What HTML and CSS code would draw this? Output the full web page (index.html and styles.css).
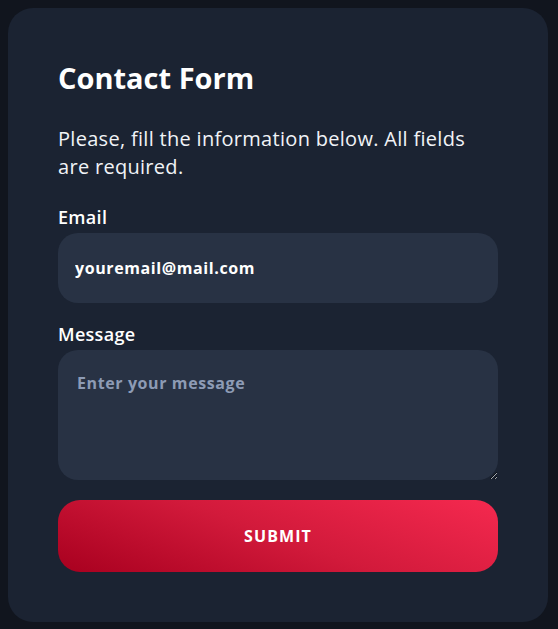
FILE: index.html
```html
<!DOCTYPE html>
<html lang="en">
<head>
  <meta charset="UTF-8" />
  <title>Contact Form</title>
  <link rel="stylesheet" href="styles.css">
</head>
<body>
  <div class="card">
    <h1>Contact Form</h1>
    <p class="intro">Please, fill the information below. All fields are required.</p>

    <form class="contact-form" onsubmit="return false">
      <label for="email">Email</label>
      <input id="email" type="email" value="youremail@mail.com">

      <label for="message">Message</label>
      <textarea id="message" placeholder="Enter your message"></textarea>

      <button type="submit">SUBMIT</button>
    </form>
  </div>
</body>
</html>
```

FILE: styles.css
```css
body {
  margin: 0;
  padding: 8px;
  background: #11151e;
  font-family: 'Open Sans', 'DejaVu Sans', sans-serif;
  color: #fff;
}

.card {
  background: #1b2332;
  border-radius: 25px;
  padding: 50px 50px 48px 50px;
  box-sizing: border-box;
  width: 540px;
  min-height: 614px;
}

h1 {
  margin: 0;
  padding-top: 3px;
  font-size: 29px;
  font-weight: 700;
  line-height: 34px;
}

.intro {
  margin: 30px 0 0 0;
  font-size: 20px;
  letter-spacing: 0.3px;
  line-height: 28px;
  color: #f1f3f7;
}

.contact-form {
  display: flex;
  flex-direction: column;
  margin-top: 24px;
}

.contact-form label {
  font-size: 18px;
  font-weight: 600;
  letter-spacing: 0.3px;
  line-height: 24px;
  margin-bottom: 4px;
}

.contact-form input,
.contact-form textarea {
  background: #283244;
  border: none;
  border-radius: 20px;
  color: #fff;
  font-family: inherit;
  font-size: 16px;
  font-weight: 700;
  letter-spacing: 0.6px;
  outline: none;
  box-sizing: border-box;
  width: 100%;
}

.contact-form input {
  height: 70px;
  padding: 0 17px;
  margin-bottom: 19px;
}

.contact-form textarea {
  height: 130px;
  padding: 22px 19px;
  resize: vertical;
}

.contact-form textarea::placeholder {
  color: #8d9bb5;
}

.contact-form button {
  margin-top: 20px;
  height: 72px;
  border: none;
  border-radius: 22px;
  background: linear-gradient(20deg, #a8001f 0%, #d21a3b 50%, #f5294f 100%);
  color: #fff;
  font-family: inherit;
  font-size: 16px;
  font-weight: 700;
  letter-spacing: 1.1px;
  cursor: pointer;
}
```
